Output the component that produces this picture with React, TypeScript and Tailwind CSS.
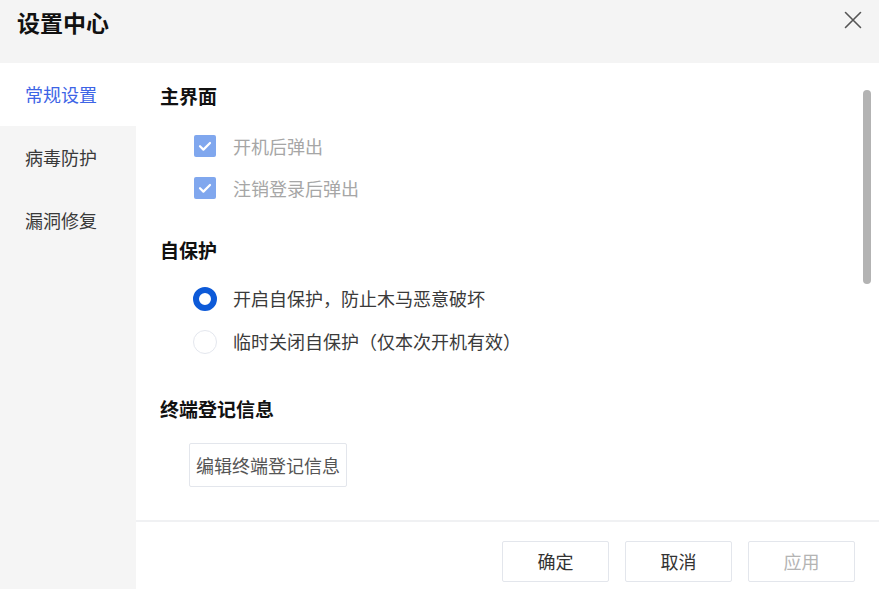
import type { ReactNode } from 'react';

const font = { fontFamily: '"Noto Sans CJK SC", "Microsoft YaHei", sans-serif' };

function Check({ label }: { label: string }) {
  return (
    <div className="h-[42px] flex items-center pl-[34px]">
      <span className="w-[22px] h-[22px] bg-[#80a7ee] rounded-[2px] flex items-center justify-center">
        <svg width="16" height="16" viewBox="0 0 16 16" fill="none">
          <path d="M3 8.2l3.4 3.4L13 5" stroke="white" strokeWidth="2.2" strokeLinecap="round" strokeLinejoin="round" />
        </svg>
      </span>
      <span className="ml-[17px] text-[18px] text-[#a6a6a6]">{label}</span>
    </div>
  );
}

function Radio({ label, checked }: { label: string; checked?: boolean }) {
  return (
    <div className="h-[43px] flex items-center pl-[33px]">
      {checked ? (
        <span className="w-[24px] h-[24px] rounded-full border-[6px] border-[#0d5ad8] bg-white" />
      ) : (
        <span className="w-[24px] h-[24px] rounded-full border-[1.5px] border-[#e4e7ee] bg-white" />
      )}
      <span className="ml-[16px] text-[18px] text-[#3a3a3a]">{label}</span>
    </div>
  );
}

function Heading({ children, className }: { children: ReactNode; className?: string }) {
  return <div className={`text-[19px] leading-[28px] font-bold text-[#111] ${className ?? ''}`}>{children}</div>;
}

function FooterButton({ children, disabled }: { children: ReactNode; disabled?: boolean }) {
  return (
    <button
      className={`w-[107px] h-[41px] border border-[#e3e6ec] rounded-[2px] bg-white text-[18px] ${
        disabled ? 'text-[#b4b4b4]' : 'text-[#333]'
      }`}
    >
      {children}
    </button>
  );
}

export default function App() {
  return (
    <div className="w-[879px] h-[589px] flex flex-col bg-white overflow-hidden" style={font}>
      <div className="h-[63px] bg-[#f4f4f4] flex items-start justify-between pl-[17px] pr-[17px] shrink-0">
        <div className="pt-[5px] text-[23px] leading-[34px] font-bold text-[#111]">设置中心</div>
        <button className="mt-[11px] w-[18px] h-[18px] flex items-center justify-center">
          <svg width="18" height="18" viewBox="0 0 18 18" fill="none">
            <path d="M1.5 1.5l15 15M16.5 1.5l-15 15" stroke="#555" strokeWidth="1.6" strokeLinecap="round" />
          </svg>
        </button>
      </div>

      <div className="flex flex-1 min-h-0">
        <div className="w-[136px] bg-[#f5f5f5] shrink-0">
          <div className="h-[63px] bg-white flex items-center pl-[25px] text-[18px] text-[#3d64e6]">常规设置</div>
          <div className="h-[63px] flex items-center pl-[25px] text-[18px] text-[#3a3a3a]">病毒防护</div>
          <div className="h-[63px] flex items-center pl-[25px] text-[18px] text-[#3a3a3a]">漏洞修复</div>
        </div>

        <div className="flex-1 flex flex-col">
          <div className="flex-1 relative pl-[24px] pt-[19px]">
            <Heading>主界面</Heading>
            <div className="mt-[15px]">
              <Check label="开机后弹出" />
              <Check label="注销登录后弹出" />
            </div>

            <Heading className="mt-[27px]">自保护</Heading>
            <div className="mt-[13px]">
              <Radio label="开启自保护，防止木马恶意破坏" checked />
              <Radio label="临时关闭自保护（仅本次开机有效）" />
            </div>

            <Heading className="mt-[32px]">终端登记信息</Heading>
            <button className="mt-[20px] ml-[29px] w-[158px] h-[44px] border border-[#e3e6ec] rounded-[2px] text-[18px] text-[#555]">
              编辑终端登记信息
            </button>

            <div className="absolute top-[27px] right-[8px] w-[8px] h-[194px] rounded-full bg-[#b3b3b3]" />
          </div>

          <div className="h-[69px] shrink-0 border-t-2 border-[#f0f1f3] flex items-start justify-end gap-[16px] pr-[24px] pt-[19px]">
            <FooterButton>确定</FooterButton>
            <FooterButton>取消</FooterButton>
            <FooterButton disabled>应用</FooterButton>
          </div>
        </div>
      </div>
    </div>
  );
}
